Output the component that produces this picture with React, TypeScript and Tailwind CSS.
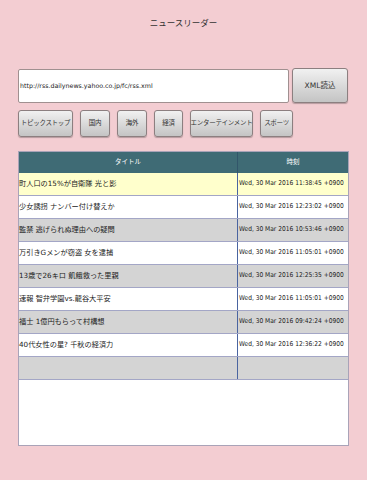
import React from "react";

const rows: [string, string][] = [
  ["町人口の15%が自衛隊 光と影", "Wed, 30 Mar 2016 11:38:45 +0900"],
  ["少女誘拐 ナンバー付け替えか", "Wed, 30 Mar 2016 12:23:02 +0900"],
  ["監禁 逃げられぬ理由への疑問", "Wed, 30 Mar 2016 10:53:46 +0900"],
  ["万引きGメンが窃盗 女を逮捕", "Wed, 30 Mar 2016 11:05:01 +0900"],
  ["13歳で26キロ 飢餓救った里親", "Wed, 30 Mar 2016 12:25:35 +0900"],
  ["速報 智弁学園vs.龍谷大平安", "Wed, 30 Mar 2016 11:05:01 +0900"],
  ["福士 1億円もらって村構想", "Wed, 30 Mar 2016 09:42:24 +0900"],
  ["40代女性の星? 千秋の経済力", "Wed, 30 Mar 2016 12:36:22 +0900"],
  ["", ""],
];

const cats = [
  ["トピックストップ", "w-[55px]"],
  ["国内", "w-[30px]"],
  ["海外", "w-[30px]"],
  ["経済", "w-[29px]"],
  ["エンターテインメント", "w-[63px]"],
  ["スポーツ", "w-[33px]"],
];

const btn =
  "flex items-center justify-center rounded-[3px] border border-[#8c7f80] bg-gradient-to-b from-[#f1f1f1] to-[#c4c4c4] text-[#333] shadow-[0_1px_1px_rgba(0,0,0,0.25)]";

export default function App() {
  return (
    <div
      className="w-[367px] h-[480px] bg-[#f3cdd2] px-[18px] flex flex-col"
      style={{ fontFamily: '"DejaVu Sans", "Noto Sans CJK JP", sans-serif' }}
    >
      <div className="pt-[17px] h-[68px] text-center text-[8.5px] text-[#333]">ニュースリーダー</div>
      <div className="flex gap-[3px] items-start">
        <div className="mt-[1px] flex-1 h-[34px] bg-white border border-[#a09090] rounded-[2px] flex items-center px-[1px] text-[6.3px] text-[#222]">
          http://rss.dailynews.yahoo.co.jp/fc/rss.xml
        </div>
        <div className={`${btn} w-[56px] h-[35px] text-[7.5px] mr-[1px]`}>XML読込</div>
      </div>
      <div className="flex gap-[7px] mt-[7px]">
        {cats.map(([t, w]) => (
          <div key={t} className={`${btn} ${w} h-[27px] text-[6.5px] tracking-[-0.3px] whitespace-nowrap`}>
            {t}
          </div>
        ))}
      </div>
      <div className="mt-[14px] h-[295px] bg-white border border-[#a9a3b8] flex flex-col">
        <div className="flex h-[21px] shrink-0 bg-[#3f6b75] text-white text-[6.5px]">
          <div className="w-[218px] shrink-0 flex items-center justify-center">タイトル</div>
          <div className="flex-1 min-w-0 flex items-center justify-center border-l border-[#32566a]">時刻</div>
        </div>
        {rows.map(([t, d], i) => {
          const bg = i === 0 ? "bg-[#ffffcc]" : i % 2 === 1 ? "bg-white" : "bg-[#d4d4d4]";
          return (
            <div key={i} className={`flex h-[23px] shrink-0 ${bg} border-b border-[#a3a6c6] text-[#222]`}>
              <div className="w-[218px] shrink-0 flex items-center text-[7.2px] whitespace-nowrap">{t}</div>
              <div
                className="flex-1 min-w-0 overflow-hidden flex items-center pl-[1px] border-l border-[#4a64a0] text-[6.6px] whitespace-nowrap"
                style={{ fontFamily: '"DejaVu Sans Condensed", "DejaVu Sans", sans-serif' }}
              >
                {d}
              </div>
            </div>
          );
        })}
      </div>
    </div>
  );
}
